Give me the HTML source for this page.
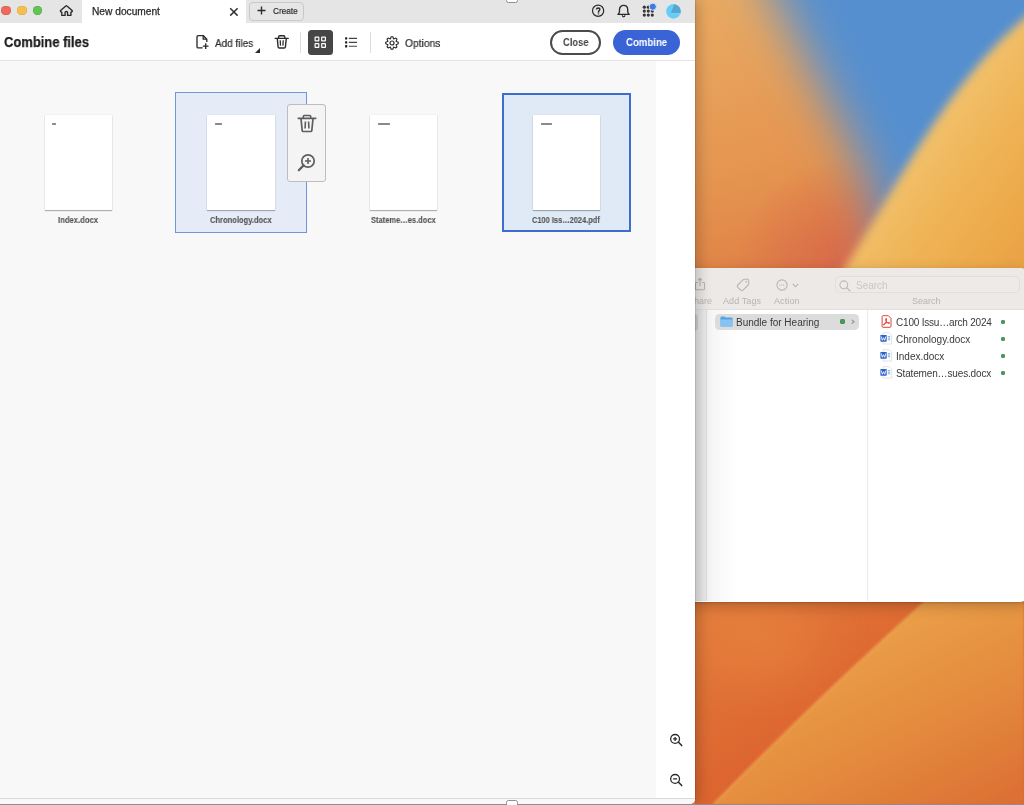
<!DOCTYPE html>
<html><head><meta charset="utf-8">
<style>
*{margin:0;padding:0;box-sizing:border-box}
html,body{width:1024px;height:805px;overflow:hidden;font-family:"Liberation Sans",sans-serif}
.t,.lbl,.fi{will-change:transform}
body{position:relative;background:#e08a48}
.a{position:absolute}
#wall{position:absolute;left:0;top:0}
#finder{position:absolute;left:600px;top:268px;width:428px;height:333.5px;background:#fff;border-radius:8px;overflow:hidden;box-shadow:0 1px 2px rgba(0,0,0,.15),0 4px 14px rgba(0,0,0,.22)}
#ftb{position:absolute;left:0;top:0;width:100%;height:41.5px;background:#ede9e6;border-bottom:1px solid #e2dedb}
#acro{position:absolute;left:0;top:0;width:695px;height:804px;background:#fff;border-radius:0 0 5px 0;overflow:hidden;box-shadow:1px 0 1px rgba(0,0,0,.12),4px 0 14px rgba(0,0,0,.2)}
#title{position:absolute;left:0;top:0;width:695px;height:23.4px;background:#e5e5e5}
#tab{position:absolute;left:82px;top:0;width:164px;height:23.4px;background:#fff}
#tb{position:absolute;left:0;top:23.4px;width:695px;height:37.6px;background:#fff;border-bottom:1px solid #e4e4e4}
#content{position:absolute;left:0;top:61px;width:656px;height:737px;background:#f8f8f8}
#zcol{position:absolute;left:656px;top:61px;width:39px;height:737px;background:#fff}
#foot{position:absolute;left:0;top:798px;width:695px;height:6px;background:#f8f8f8;border-top:1px solid #dadada}
.t{position:absolute;white-space:nowrap;line-height:1}
.page{position:absolute;width:67.6px;height:95px;background:#fff;box-shadow:0 1px 1px rgba(0,0,0,.28),0 0 1px rgba(0,0,0,.12)}
.lbl{position:absolute;font-size:8.7px;font-weight:bold;color:#555;-webkit-text-stroke:.1px #555;white-space:nowrap;line-height:1;transform-origin:0 0}
.dot{position:absolute;width:4.6px;height:4.6px;border-radius:50%;background:#4a9a5e;box-shadow:inset 0 0 0 .6px #3d8a50}
.fi{position:absolute;font-size:10px;color:#3a3a3a;white-space:nowrap;line-height:1}
</style></head><body>
<svg id="wall" width="1024" height="805" viewBox="0 0 1024 805">
<defs>
<linearGradient id="go" x1="0" y1="0" x2="0.3" y2="1"><stop offset="0" stop-color="#e9aa62"/><stop offset=".6" stop-color="#e59550"/><stop offset="1" stop-color="#df7f45"/></linearGradient>
<radialGradient id="gr" cx="845" cy="270" r="110" gradientUnits="userSpaceOnUse"><stop offset="0" stop-color="#d8664a" stop-opacity=".9"/><stop offset="1" stop-color="#d8664a" stop-opacity="0"/></radialGradient>
<linearGradient id="gy" x1="860" y1="150" x2="1024" y2="270" gradientUnits="userSpaceOnUse"><stop offset="0" stop-color="#f4c97a"/><stop offset=".5" stop-color="#efb456"/><stop offset="1" stop-color="#eaa144"/></linearGradient>
<linearGradient id="gb1" x1="0" y1="0" x2="1" y2="1"><stop offset="0" stop-color="#e27c3c"/><stop offset=".5" stop-color="#dd652f"/><stop offset="1" stop-color="#dc6430"/></linearGradient>
<linearGradient id="gb2" x1="922" y1="601" x2="1024" y2="805" gradientUnits="userSpaceOnUse"><stop offset="0" stop-color="#eb9f48"/><stop offset=".5" stop-color="#e38a3d"/><stop offset="1" stop-color="#dc6d34"/></linearGradient>
<filter id="bl" x="-50%" y="-50%" width="200%" height="200%"><feGaussianBlur stdDeviation="25"/></filter>
<filter id="bl3" x="-50%" y="-50%" width="200%" height="200%"><feGaussianBlur stdDeviation="25"/></filter>
<filter id="bl2"><feGaussianBlur stdDeviation=".8"/></filter>
<filter id="bl5" x="-20%" y="-20%" width="140%" height="140%"><feGaussianBlur stdDeviation="5"/></filter>
<filter id="bl4" x="-20%" y="-20%" width="140%" height="140%"><feGaussianBlur stdDeviation="1.5"/></filter>
</defs>
<rect x="695" y="0" width="329" height="280" fill="url(#go)"/>
<rect x="695" y="0" width="329" height="280" fill="url(#gr)"/>
<path d="M736,-80 Q801,50 851,145 Q886,215 892,300 L1150,300 L1150,-80 Z" fill="#548fd0" filter="url(#bl)"/>
<path d="M1061,-10 C954,61.4 904.8,176.1 830.7,290 L1100,290 L1100,0 Z" fill="url(#gy)" filter="url(#bl5)"/>

<rect x="695" y="600" width="329" height="205" fill="url(#gb1)"/>
<ellipse cx="760" cy="640" rx="60" ry="40" fill="#e8843f" opacity=".6" filter="url(#bl3)"/>
<path d="M927,600 Q824,692 713,805 L1024,805 L1024,600 Z" fill="url(#gb2)" filter="url(#bl2)"/>
<path d="M927,600 Q824,692 713,805" fill="none" stroke="#f2b560" stroke-width="2" opacity=".6" filter="url(#bl4)"/>
</svg>

<div id="finder">
  <div id="ftb"></div>
  <!-- coordinates relative to finder left=600, top=268 -->
  <!-- share icon (partially hidden) -->
  <svg class="a" style="left:93.5px;top:8.5px" width="12" height="14" viewBox="0 0 12 14"><path d="M4 5.5 H2.3 C1.8 5.5 1.5 5.8 1.5 6.3 V12 C1.5 12.5 1.8 12.8 2.3 12.8 H9.7 C10.2 12.8 10.5 12.5 10.5 12 V6.3 C10.5 5.8 10.2 5.5 9.7 5.5 H8 M6 9 V1.3 M4 3.3 L6 1.2 L8 3.3" fill="none" stroke="#b9b5b2" stroke-width="1.1"/></svg>
  <div class="t" style="left:87.5px;top:29.2px;font-size:9px;color:#b8b4b1">Share</div>
  <!-- tag icon -->
  <svg class="a" style="left:135.5px;top:9.5px" width="14" height="14" viewBox="0 0 14 14"><path d="M8.2 1.3 H11.4 C12.2 1.3 12.7 1.8 12.7 2.6 V5.8 C12.7 6.3 12.5 6.7 12.2 7 L7 12.2 C6.3 12.9 5.4 12.9 4.7 12.2 L1.8 9.3 C1.1 8.6 1.1 7.7 1.8 7 L7 1.8 C7.3 1.5 7.7 1.3 8.2 1.3 Z" fill="none" stroke="#b9b5b2" stroke-width="1.1"/><circle cx="10.2" cy="3.8" r=".9" fill="#b9b5b2"/></svg>
  <div class="t" style="left:123.3px;top:29.2px;font-size:9px;color:#b8b4b1;letter-spacing:.1px">Add Tags</div>
  <!-- action icon -->
  <svg class="a" style="left:176px;top:10.5px" width="12" height="12" viewBox="0 0 12 12"><circle cx="6" cy="6" r="5.1" fill="none" stroke="#b9b5b2" stroke-width="1.1"/><path d="M3.3 6 H8.7" stroke="#b9b5b2" stroke-width="1" stroke-dasharray="1 .8"/></svg>
  <svg class="a" style="left:192px;top:14.5px" width="7" height="5" viewBox="0 0 7 5"><path d="M.8 .8 L3.5 3.6 L6.2 .8" fill="none" stroke="#b9b5b2" stroke-width="1.1"/></svg>
  <div class="t" style="left:174.3px;top:29.2px;font-size:9px;color:#b8b4b1;letter-spacing:.1px">Action</div>
  <!-- search -->
  <div class="a" style="left:234.5px;top:8.3px;width:185px;height:16.5px;border:1px solid #e2deda;border-radius:5px;background:#eeeae7"></div>
  <svg class="a" style="left:239px;top:12px" width="12" height="12" viewBox="0 0 12 12"><circle cx="4.8" cy="4.8" r="3.9" fill="none" stroke="#bdb9b6" stroke-width="1.1"/><path d="M7.7 7.7 L11 11" stroke="#bdb9b6" stroke-width="1.2" stroke-linecap="round"/></svg>
  <div class="t" style="left:255.5px;top:12.5px;font-size:10px;color:#cbc7c4">Search</div>
  <div class="t" style="left:312.4px;top:29.2px;font-size:9px;color:#b8b4b1">Search</div>
  <!-- column 1 -->
  <div class="a" style="left:0;top:42px;width:106.5px;height:291px;background:linear-gradient(90deg,#f1f1f1 85%,#e6e6e6 91%,#ededed)"></div>
  <div class="a" style="left:86px;top:46px;width:12px;height:16.5px;background:#cfcfcf;border-radius:4px"></div>
  <div class="a" style="left:106px;top:42px;width:1px;height:291px;background:#dedede"></div>
  <div class="a" style="left:107px;top:42px;width:30px;height:291px;background:linear-gradient(90deg,#f4f4f4,#fff)"></div>
  <div class="a" style="left:115.3px;top:45.9px;width:143.7px;height:16.5px;background:#dcdcdc;border-radius:4.5px"></div>
  <svg class="a" style="left:119.5px;top:48px" width="13" height="11" viewBox="0 0 13 11"><path d="M.5 1.2 C.5 .8 .8 .5 1.2 .5 H4.6 L5.8 1.6 H11.8 C12.2 1.6 12.5 1.9 12.5 2.3 V10 C12.5 10.3 12.2 10.5 11.9 10.5 H1.1 C.8 10.5 .5 10.3 .5 10 Z" fill="#5aa6e4"/><path d="M.5 3 H12.5 V10 C12.5 10.3 12.2 10.5 11.9 10.5 H1.1 C.8 10.5 .5 10.3 .5 10 Z" fill="#84c3f4"/><path d="M.5 3 H12.5" stroke="#4a92d0" stroke-width=".6"/></svg>
  <div class="fi" style="left:135.6px;top:49.5px">Bundle for Hearing</div>
  <div class="dot" style="left:240.2px;top:51.2px"></div>
  <svg class="a" style="left:250.9px;top:51.2px" width="4" height="6" viewBox="0 0 4 6"><path d="M.8 .7 L3 2.75 L.8 4.8" fill="none" stroke="#9d9d9d" stroke-width="1.3"/></svg>
  <div class="a" style="left:267px;top:42px;width:1px;height:291px;background:#ebebeb"></div>
  <!-- column 2 files -->
  <svg class="a" style="left:281px;top:46.8px" width="11" height="13" viewBox="0 0 11 13"><path d="M1.1 1.6 C1.1 1 1.5 .7 2 .7 H7.3 L10 3.4 V11.4 C10 11.9 9.6 12.3 9.1 12.3 H2 C1.5 12.3 1.1 11.9 1.1 11.4 Z" fill="#fff" stroke="#e0443b" stroke-width="1"/><path d="M5.2 3.4 C4.3 3.4 4.6 5.6 5.6 6.9 C6.5 8.1 8.3 8.7 8.6 8.2 C9 7.6 6.3 7.3 4.6 8 C3 8.6 2.1 9.8 2.6 10 C3.3 10.2 4.6 8.1 5.2 6.3 C5.7 4.8 5.8 3.4 5.2 3.4 Z" fill="#e0443b" stroke="#e0443b" stroke-width="1" stroke-linejoin="round"/></svg>
  <div class="fi" style="left:295.9px;top:49.5px;letter-spacing:-.2px">C100 Issu…arch 2024</div>
  <div class="dot" style="left:400.5px;top:51.5px"></div>
  <svg class="a" style="left:279.5px;top:63.7px" width="13" height="13" viewBox="0 0 13 13"><path d="M3.1 .7 H9.2 L11.6 3.1 V12 H3.1 Z" fill="#fff" stroke="#d9d9d9" stroke-width=".7"/><path d="M7.8 4.6 H10.2 M7.8 6.2 H10.2 M7.8 7.8 H10.2" stroke="#6fa3e8" stroke-width=".9"/><rect x=".4" y="3" width="6.3" height="6.7" rx=".6" fill="#2c62c9"/><path d="M1.3 4.5 L2.35 8.3 L3.55 5.7 L4.75 8.3 L5.8 4.5" fill="none" stroke="#fff" stroke-width=".85" stroke-linejoin="round"/></svg>
  <div class="fi" style="left:296px;top:66.5px">Chronology.docx</div>
  <div class="dot" style="left:400.5px;top:68.5px"></div>
  <svg class="a" style="left:279.5px;top:80.7px" width="13" height="13" viewBox="0 0 13 13"><path d="M3.1 .7 H9.2 L11.6 3.1 V12 H3.1 Z" fill="#fff" stroke="#d9d9d9" stroke-width=".7"/><path d="M7.8 4.6 H10.2 M7.8 6.2 H10.2 M7.8 7.8 H10.2" stroke="#6fa3e8" stroke-width=".9"/><rect x=".4" y="3" width="6.3" height="6.7" rx=".6" fill="#2c62c9"/><path d="M1.3 4.5 L2.35 8.3 L3.55 5.7 L4.75 8.3 L5.8 4.5" fill="none" stroke="#fff" stroke-width=".85" stroke-linejoin="round"/></svg>
  <div class="fi" style="left:296px;top:83.5px">Index.docx</div>
  <div class="dot" style="left:400.5px;top:85.5px"></div>
  <svg class="a" style="left:279.5px;top:97.7px" width="13" height="13" viewBox="0 0 13 13"><path d="M3.1 .7 H9.2 L11.6 3.1 V12 H3.1 Z" fill="#fff" stroke="#d9d9d9" stroke-width=".7"/><path d="M7.8 4.6 H10.2 M7.8 6.2 H10.2 M7.8 7.8 H10.2" stroke="#6fa3e8" stroke-width=".9"/><rect x=".4" y="3" width="6.3" height="6.7" rx=".6" fill="#2c62c9"/><path d="M1.3 4.5 L2.35 8.3 L3.55 5.7 L4.75 8.3 L5.8 4.5" fill="none" stroke="#fff" stroke-width=".85" stroke-linejoin="round"/></svg>
  <div class="fi" style="left:296px;top:100.5px;letter-spacing:-.15px">Statemen…sues.docx</div>
  <div class="dot" style="left:400.5px;top:102.5px"></div>
</div>

<div id="acro">
  <div id="title"></div>
  <div id="tab"></div>
  <!-- traffic lights -->
  <div class="a" style="left:1.2px;top:5.5px;width:9.5px;height:9.5px;border-radius:50%;background:#ed6a5e;box-shadow:inset 0 0 0 .5px #d9574b"></div>
  <div class="a" style="left:17px;top:5.5px;width:9.5px;height:9.5px;border-radius:50%;background:#f4bf4f;box-shadow:inset 0 0 0 .5px #dca43a"></div>
  <div class="a" style="left:32.5px;top:5.5px;width:9.5px;height:9.5px;border-radius:50%;background:#61c554;box-shadow:inset 0 0 0 .5px #4eab40"></div>
  <!-- home -->
  <svg class="a" style="left:55px;top:2px" width="25" height="18" viewBox="0 0 25 18"><path d="M10.1 13.4 V10.6 C10.1 9.9 10.6 9.5 11.35 9.5 C12.1 9.5 12.6 9.9 12.6 10.6 V13.4 H15.9 V10.4 L17 9.6 C17.4 9.3 17.4 8.9 17.1 8.6 L11.9 3.9 C11.6 3.6 11.1 3.6 10.8 3.9 L5.6 8.6 C5.3 8.9 5.3 9.3 5.7 9.6 L6.8 10.4 V13.4 Z" fill="none" stroke="#2a2a2a" stroke-width="1.35" stroke-linejoin="round"/></svg>
  <div class="t" style="left:91.5px;top:7.3px;font-size:10.2px;color:#2a2a2a;-webkit-text-stroke:.25px #2a2a2a">New document</div>
  <svg class="a" style="left:229px;top:6.5px" width="10" height="10" viewBox="0 0 10 10"><path d="M1.2 1.2 L8.6 8.6 M8.6 1.2 L1.2 8.6" stroke="#333" stroke-width="1.5"/></svg>
  <div class="a" style="left:249px;top:2px;width:55px;height:18.5px;border:1px solid #c9c9c9;border-radius:4px;background:#e6e6e6"></div>
  <svg class="a" style="left:257px;top:6.4px" width="9" height="9" viewBox="0 0 9 9"><path d="M4.5 .5 V8.5 M.5 4.5 H8.5" stroke="#2c2c2c" stroke-width="1.4"/></svg>
  <div class="t" style="left:272.9px;top:5.6px;font-size:9.9px;color:#2a2a2a;transform:scaleX(.83);transform-origin:0 0;-webkit-text-stroke:.2px #2a2a2a">Create</div>
  <!-- right icons -->
  <svg class="a" style="left:591px;top:4px" width="14" height="14" viewBox="0 0 14 14"><circle cx="7.1" cy="6.75" r="5.6" fill="none" stroke="#2a2a2a" stroke-width="1.25"/><path d="M5.5 5.4 C5.5 4.4 6.2 3.9 7.2 3.9 C8.2 3.9 8.9 4.5 8.9 5.3 C8.9 6.4 7.5 6.6 7.5 8 V8.7" fill="none" stroke="#2a2a2a" stroke-width="1.45"/><rect x="6.8" y="9.3" width="1.4" height="1.3" fill="#555"/></svg>
  <svg class="a" style="left:612px;top:2px" width="20" height="18" viewBox="0 0 20 18"><path d="M6 12.4 C7.2 11.6 7.5 10.5 7.5 9.2 V7.5 C7.5 4.9 9.3 3.3 11.6 3.3 C13.9 3.3 15.7 4.9 15.7 7.5 V9.2 C15.7 10.5 16 11.6 17.2 12.4 Z" fill="none" stroke="#2a2a2a" stroke-width="1.35" stroke-linejoin="round"/><path d="M10.3 13.3 C10.3 15.3 12.9 15.3 12.9 13.3" fill="none" stroke="#2a2a2a" stroke-width="1.3"/></svg>
  <svg class="a" style="left:640px;top:1px" width="18" height="19" viewBox="0 0 18 19"><g fill="#353535"><circle cx="4.3" cy="6.2" r="1.6"/><circle cx="8.3" cy="6.2" r="1.6"/><circle cx="4.3" cy="10.1" r="1.6"/><circle cx="8.3" cy="10.1" r="1.6"/><circle cx="12.3" cy="10.1" r="1.6"/><circle cx="4.3" cy="14.1" r="1.6"/><circle cx="8.3" cy="14.1" r="1.6"/><circle cx="12.3" cy="14.1" r="1.6"/></g><circle cx="12.8" cy="5.7" r="3.6" fill="#3e7be6" stroke="#e5e5e5" stroke-width="1"/></svg>
  <svg class="a" style="left:666px;top:3.6px" width="15" height="15" viewBox="0 0 15 15"><circle cx="7.45" cy="7.35" r="7.3" fill="#66cdf7"/><path d="M4.9 8.9 L8.3 .3 A7.3 7.3 0 0 1 14.55 8.9 Z" fill="#56a6d0"/><path d="M4.9 8.9 H14.55 L14.3 10.2 H4.5 Z" fill="#72d3fb"/></svg>
  <div id="tb"></div>
  <div class="t" style="left:4.45px;top:35.3px;font-size:14.49px;font-weight:bold;color:#1b1b1b;transform:scaleX(.895);transform-origin:0 0;-webkit-text-stroke:.25px #1b1b1b">Combine files</div>
  <!-- add files icon -->
  <svg class="a" style="left:195px;top:34px" width="16" height="17" viewBox="0 0 16 17"><path d="M7.6 13.9 H3.2 C2.5 13.9 2 13.4 2 12.7 V2.8 C2 2.1 2.5 1.6 3.2 1.6 H8.2 L11.8 5.2 V7.9" fill="none" stroke="#2a2a2a" stroke-width="1.35" stroke-linejoin="round"/><path d="M8.2 1.8 V5.2 H11.6" fill="none" stroke="#2a2a2a" stroke-width="1.3"/><path d="M10.7 9.3 V14.9 M7.9 12.1 H13.5" stroke="#2a2a2a" stroke-width="1.35"/></svg>
  <div class="t" style="left:215.2px;top:37.7px;font-size:10.87px;color:#2a2a2a;transform:scaleX(.916);transform-origin:0 0;-webkit-text-stroke:.2px #2a2a2a">Add files</div>
  <svg class="a" style="left:255px;top:47.5px" width="5" height="5" viewBox="0 0 5 5"><path d="M5 0 V5 H0 Z" fill="#2c2c2c"/></svg>
  <!-- trash -->
  <svg class="a" style="left:274px;top:34px" width="16" height="16" viewBox="0 0 16 16"><path d="M1.2 4.4 H14.2" stroke="#2a2a2a" stroke-width="1.4" stroke-linecap="round"/><path d="M4.6 4.2 V2.9 C4.6 2.1 5.1 1.7 5.8 1.7 H9.6 C10.3 1.7 10.8 2.1 10.8 2.9 V4.2" fill="none" stroke="#2a2a2a" stroke-width="1.35"/><path d="M3.3 4.6 L4.1 13 C4.2 13.7 4.6 14 5.3 14 H10.2 C10.9 14 11.3 13.7 11.4 13 L12.3 4.6" fill="none" stroke="#2a2a2a" stroke-width="1.4" stroke-linejoin="round"/><path d="M6.2 6.2 L6.5 11.6 M9.2 6.2 L8.9 11.6" stroke="#2a2a2a" stroke-width="1.25"/></svg>
  <div class="a" style="left:300px;top:31.5px;width:1px;height:21.5px;background:#dcdcdc"></div>
  <div class="a" style="left:307.5px;top:30px;width:25px;height:24.8px;border-radius:3.5px;background:#464646"></div>
  <svg class="a" style="left:313.5px;top:36.3px" width="13" height="13" viewBox="0 0 13 13"><g fill="none" stroke="#fff" stroke-width="1.2"><rect x="1.1" y="1.1" width="3.7" height="3.7" rx=".3"/><rect x="7.7" y="1.1" width="3.7" height="3.7" rx=".3"/><rect x="1.1" y="7.7" width="3.7" height="3.7" rx=".3"/><rect x="7.7" y="7.7" width="3.7" height="3.7" rx=".3"/></g></svg>
  <svg class="a" style="left:344px;top:36px" width="14" height="13" viewBox="0 0 14 13"><g fill="#1e1e1e"><rect x="1.1" y="1.2" width="2.1" height="2.3" rx=".3"/><rect x="1.1" y="5.2" width="2.1" height="2.3" rx=".3"/><rect x="1.1" y="9.1" width="2.1" height="2.3" rx=".3"/></g><path d="M5.3 2.4 H12.6 M5.3 6.4 H12.6 M5.3 10.3 H12.6" stroke="#444" stroke-width="1.1" stroke-linecap="round"/></svg>
  <div class="a" style="left:370px;top:31.5px;width:1px;height:21.5px;background:#dcdcdc"></div>
  <!-- gear -->
  <svg class="a" style="left:383.6px;top:34.9px" width="16" height="16" viewBox="0 0 16 16"><path d="M7.23 1.75 L8.77 1.75 L9.68 3.93 L11.88 3.04 L12.96 4.12 L12.07 6.32 L14.25 7.23 L14.25 8.77 L12.07 9.68 L12.96 11.88 L11.88 12.96 L9.68 12.07 L8.77 14.25 L7.23 14.25 L6.32 12.07 L4.12 12.96 L3.04 11.88 L3.93 9.68 L1.75 8.77 L1.75 7.23 L3.93 6.32 L3.04 4.12 L4.12 3.04 L6.32 3.93 Z" fill="none" stroke="#2a2a2a" stroke-width="1.15" stroke-linejoin="round"/><circle cx="8" cy="8" r="2" fill="none" stroke="#2a2a2a" stroke-width="1.2"/></svg>
  <div class="t" style="left:404.9px;top:37.7px;font-size:10.87px;color:#2a2a2a;transform:scaleX(.945);transform-origin:0 0;-webkit-text-stroke:.2px #2a2a2a">Options</div>
  <!-- buttons -->
  <div class="a" style="left:550px;top:30px;width:51px;height:24.5px;border:2px solid #4b4b4b;border-radius:12.5px"></div>
  <div class="t" style="left:562.6px;top:36.9px;font-size:10.58px;font-weight:bold;color:#444;transform:scaleX(.886);transform-origin:0 0">Close</div>
  <div class="a" style="left:613px;top:30px;width:67px;height:24.5px;border-radius:12.5px;background:#3a64d6"></div>
  <div class="t" style="left:625.9px;top:37px;font-size:10.58px;font-weight:bold;color:#fff;transform:scaleX(.91);transform-origin:0 0">Combine</div>

  <div id="content"></div>
  <div id="zcol"></div>
  <div id="foot"></div>
  <!-- thumbnails (absolute to acro) -->
  <div class="page" style="left:44.7px;top:115px"><div class="a" style="left:7.6px;top:8px;width:4px;height:1.7px;background:#8a8a8a;border-radius:.6px;filter:blur(.25px)"></div></div>
  <div class="lbl" style="left:58.06px;top:215.6px;transform:scaleX(.883)">Index.docx</div>

  <div class="a" style="left:175px;top:92px;width:132px;height:141px;background:#e5ecf8;border:1px solid #6f97d8"></div>
  <div class="page" style="left:207px;top:115px"><div class="a" style="left:8.1px;top:8px;width:7.3px;height:1.7px;background:#8a8a8a;border-radius:.6px;filter:blur(.25px)"></div></div>
  <div class="lbl" style="left:209.98px;top:215.6px;transform:scaleX(.870)">Chronology.docx</div>
  <div class="a" style="left:287px;top:104px;width:39px;height:78px;background:#f4f4f4;border:1px solid #bdbdbd;border-radius:3px"></div>
  <svg class="a" style="left:296.5px;top:114px" width="20" height="19" viewBox="0 0 20 19"><path d="M1.3 4.3 H18.7" stroke="#5e5e5e" stroke-width="1.7" stroke-linecap="round"/><path d="M6.3 4 V2.5 C6.3 1.9 6.7 1.5 7.3 1.5 H12.7 C13.3 1.5 13.7 1.9 13.7 2.5 V4" fill="none" stroke="#5e5e5e" stroke-width="1.6"/><path d="M4 4.6 L5.2 16.6 C5.3 17.2 5.6 17.5 6.2 17.5 H13.8 C14.4 17.5 14.7 17.2 14.8 16.6 L16 4.6" fill="none" stroke="#5e5e5e" stroke-width="1.7" stroke-linejoin="round"/><path d="M8.4 7.5 L8.1 14.5 M11.6 7.5 L11.9 14.5" stroke="#5e5e5e" stroke-width="1.6"/></svg>
  <svg class="a" style="left:297px;top:153px" width="19" height="19" viewBox="0 0 19 19"><circle cx="11" cy="8" r="6.2" fill="none" stroke="#5e5e5e" stroke-width="1.7"/><path d="M6.6 12.4 L1.8 17.2" stroke="#5e5e5e" stroke-width="2.2" stroke-linecap="round"/><path d="M11 5 V11 M8 8 H14" stroke="#5e5e5e" stroke-width="1.6"/></svg>

  <div class="page" style="left:369.8px;top:115px"><div class="a" style="left:8.2px;top:8px;width:12.2px;height:1.7px;background:#8a8a8a;border-radius:.6px;filter:blur(.25px)"></div></div>
  <div class="lbl" style="left:371.03px;top:215.6px;transform:scaleX(.865)">Stateme…es.docx</div>

  <div class="a" style="left:501.5px;top:93px;width:129.6px;height:139.2px;background:#dfeaf6;border:2px solid #3d6ecf"></div>
  <div class="page" style="left:532.7px;top:115px"><div class="a" style="left:7.9px;top:8px;width:11.6px;height:1.7px;background:#8a8a8a;border-radius:.6px;filter:blur(.25px)"></div></div>
  <div class="lbl" style="left:532.39px;top:215.6px;transform:scaleX(.856)">C100 Iss…2024.pdf</div>

  <!-- zoom icons -->
  <svg class="a" style="left:669px;top:733px" width="15" height="15" viewBox="0 0 15 15"><circle cx="6.1" cy="5.9" r="4.4" fill="none" stroke="#2a2a2a" stroke-width="1.3"/><path d="M9.3 9.1 L12.7 12.6" stroke="#2a2a2a" stroke-width="1.5" stroke-linecap="round"/><path d="M6.1 3.9 V7.9 M4.1 5.9 H8.1" stroke="#2a2a2a" stroke-width="1.3"/></svg>
  <svg class="a" style="left:669px;top:772.6px" width="15" height="15" viewBox="0 0 15 15"><circle cx="6.1" cy="5.9" r="4.4" fill="none" stroke="#2a2a2a" stroke-width="1.3"/><path d="M9.3 9.1 L12.7 12.6" stroke="#2a2a2a" stroke-width="1.5" stroke-linecap="round"/><path d="M4.1 5.9 H8.1" stroke="#2a2a2a" stroke-width="1.3"/></svg>
</div>

<div class="a" style="left:0;top:803.5px;width:1024px;height:2px;background:linear-gradient(#9a9a9a,#6a6a6a)"></div>
<div class="a" style="left:505.5px;top:-3px;width:12.5px;height:5.5px;border:1.3px solid #8f8f8f;border-radius:2.5px;background:#fff"></div>
<div class="a" style="left:505.5px;top:800px;width:12.5px;height:8px;border:1.3px solid #8f8f8f;border-radius:2.5px;background:#fff"></div>
</body></html>
